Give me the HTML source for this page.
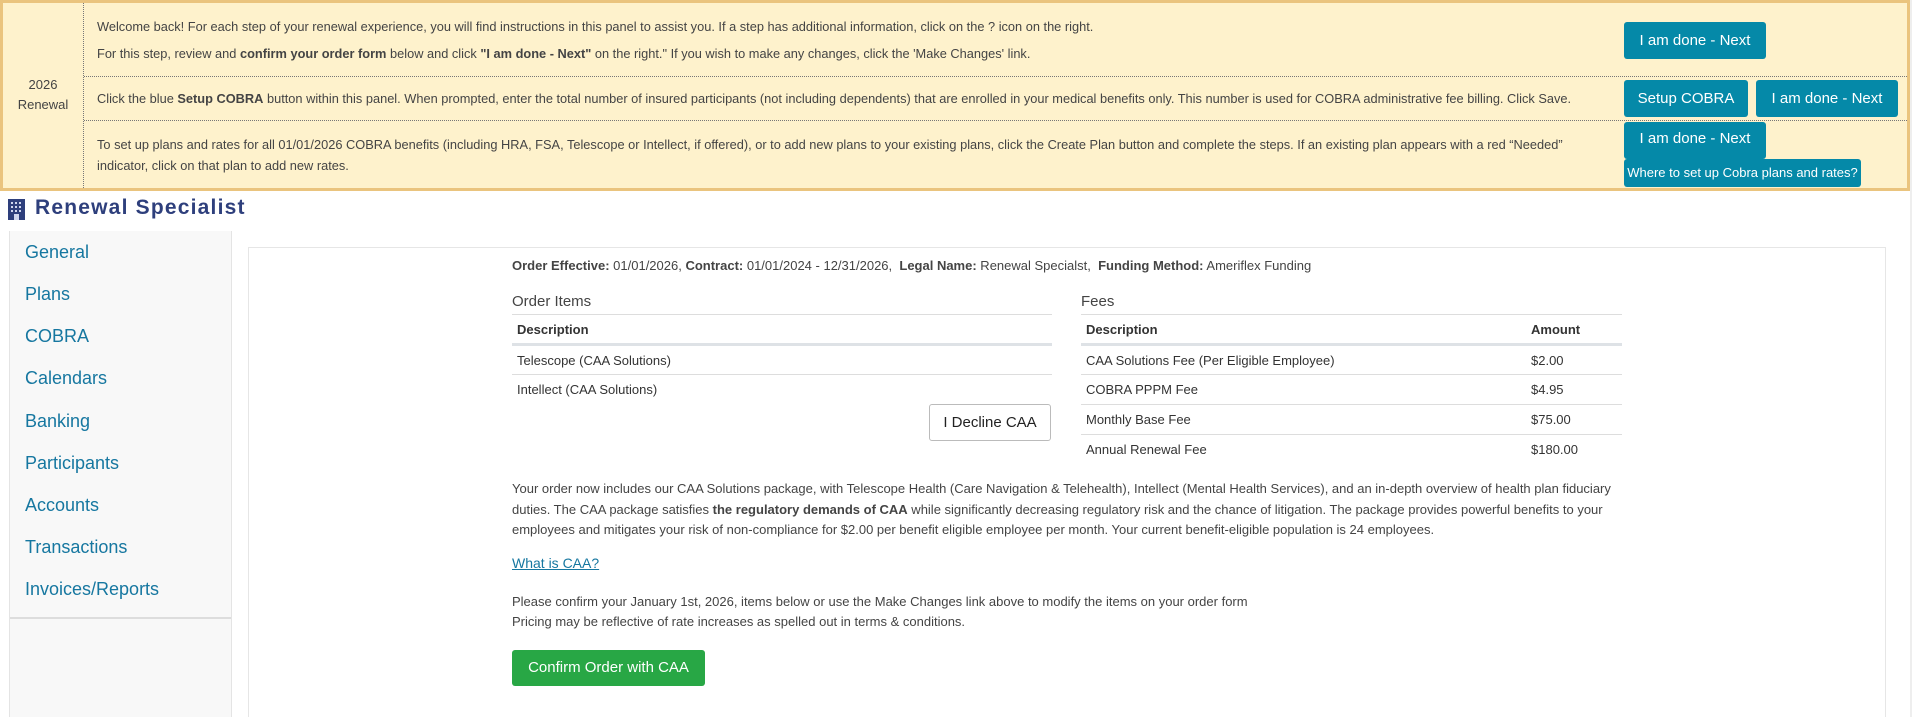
<!DOCTYPE html>
<html><head><meta charset="utf-8"><style>
*{box-sizing:border-box;margin:0;padding:0}
html,body{width:1912px;height:717px;overflow:hidden}
body{background:#fff;font-family:"Liberation Sans",sans-serif;color:#444;position:relative}
.abs{position:absolute}
.banner{left:0;top:0;width:1910px;height:191px;background:#fef2cc;border:3px solid #eac47e}
.col1{left:0;top:0;width:81px;height:185px;border-right:1px dotted #777;font-size:13px;text-align:center;line-height:20px;padding-top:72px;color:#444}
.hl{height:0;border-top:1px dotted #777;left:81px;width:1823px}
.txt{font-size:12.8px;color:#444;left:97px;white-space:nowrap}
.btn{background:#0589a8;color:#fff;border-radius:3px;font-size:15px;text-align:center;font-family:"Liberation Sans",sans-serif}
.side a{position:absolute;left:15px;font-size:18px;color:#1677a0;text-decoration:none}
table{border-collapse:collapse;font-size:13px;color:#333}
td,th{text-align:left;padding:0 5px;height:30px;border-top:1px solid #ddd}
th{font-weight:bold;border-bottom:3px solid #dee2e6;height:30px}
</style></head><body>
<div class="abs banner"></div>
<div class="abs col1" style="left:3px;top:3px">2026<br>Renewal</div>
<div class="abs hl" style="top:76px;left:84px"></div>
<div class="abs hl" style="top:120px;left:84px"></div>
<div class="abs txt" style="top:19px">Welcome back! For each step of your renewal experience, you will find instructions in this panel to assist you. If a step has additional information, click on the ? icon on the right.</div>
<div class="abs txt" style="top:46px">For this step, review and <b>confirm your order form</b> below and click <b>"I am done - Next"</b> on the right." If you wish to make any changes, click the 'Make Changes' link.</div>
<div class="abs txt" style="top:91px">Click the blue <b>Setup COBRA</b> button within this panel. When prompted, enter the total number of insured participants (not including dependents) that are enrolled in your medical benefits only. This number is used for COBRA administrative fee billing. Click Save.</div>
<div class="abs txt" style="top:137px">To set up plans and rates for all 01/01/2026 COBRA benefits (including HRA, FSA, Telescope or Intellect, if offered), or to add new plans to your existing plans, click the Create Plan button and complete the steps. If an existing plan appears with a red “Needed”</div>
<div class="abs txt" style="top:158px">indicator, click on that plan to add new rates.</div>
<div class="abs btn" style="left:1624px;top:22px;width:142px;height:37px;line-height:37px">I am done - Next</div>
<div class="abs btn" style="left:1624px;top:80px;width:124px;height:37px;line-height:37px">Setup COBRA</div>
<div class="abs btn" style="left:1756px;top:80px;width:142px;height:37px;line-height:37px">I am done - Next</div>
<div class="abs btn" style="left:1624px;top:122px;width:142px;height:37px;line-height:34px">I am done - Next</div>
<div class="abs btn" style="left:1624px;top:159px;width:237px;height:28px;line-height:28px;font-size:13px">Where to set up Cobra plans and rates?</div>
<div class="abs" style="left:1910px;top:0;width:2px;height:717px;background:#eee"></div>

<svg class="abs" style="left:8px;top:199px" width="17" height="21" viewBox="0 0 17 21"><rect width="17" height="21" fill="#2e3f7c"/><g fill="#cfd6ee"><rect x="3" y="3" width="2" height="2"/><rect x="7" y="3" width="2" height="2"/><rect x="11" y="3" width="2" height="2"/><rect x="3" y="7" width="2" height="2"/><rect x="7" y="7" width="2" height="2"/><rect x="11" y="7" width="2" height="2"/><rect x="3" y="11" width="2" height="2"/><rect x="7" y="11" width="2" height="2"/><rect x="11" y="11" width="2" height="2"/><rect x="6" y="15" width="5" height="6"/></g></svg>
<div class="abs" style="left:35px;top:196px;font-size:21px;font-weight:bold;color:#2e3f7c;letter-spacing:1.2px">Renewal Specialist</div>

<div class="abs side" style="left:9px;top:231px;width:223px;height:486px;background:#f8f8f8;border-left:1px solid #e4e4e4;border-right:1px solid #e4e4e4">
<div class="abs" style="left:0;top:386px;width:221px;border-top:2px solid #ddd"></div>
<a style="top:11px">General</a><a style="top:53px">Plans</a><a style="top:95px">COBRA</a><a style="top:137px">Calendars</a><a style="top:180px">Banking</a><a style="top:222px">Participants</a><a style="top:264px">Accounts</a><a style="top:306px">Transactions</a><a style="top:348px">Invoices/Reports</a>
</div>

<div class="abs" style="left:248px;top:247px;width:1638px;height:470px;border:1px solid #e6e6e6;border-bottom:none"></div>
<div class="abs" style="left:512px;top:258px;font-size:13px;color:#444;white-space:nowrap"><b>Order Effective:</b> 01/01/2026, <b>Contract:</b> 01/01/2024 - 12/31/2026,&nbsp; <b>Legal Name:</b> Renewal Specialst,&nbsp; <b>Funding Method:</b> Ameriflex Funding</div>
<div class="abs" style="left:512px;top:293px;font-size:15px;color:#444">Order Items</div>
<div class="abs" style="left:1081px;top:293px;font-size:15px;color:#444">Fees</div>
<table class="abs" style="left:512px;top:314px;width:540px">
<tr><th>Description</th></tr><tr><td>Telescope (CAA Solutions)</td></tr><tr><td>Intellect (CAA Solutions)</td></tr></table>
<div class="abs" style="left:929px;top:404px;width:122px;height:37px;border:1px solid #bbb;border-radius:3px;font-size:15px;color:#222;text-align:center;line-height:35px">I Decline CAA</div>
<table class="abs" style="left:1081px;top:314px;width:541px">
<tr><th>Description</th><th style="width:96px">Amount</th></tr>
<tr><td>CAA Solutions Fee (Per Eligible Employee)</td><td>$2.00</td></tr>
<tr><td>COBRA PPPM Fee</td><td>$4.95</td></tr>
<tr><td>Monthly Base Fee</td><td>$75.00</td></tr>
<tr><td>Annual Renewal Fee</td><td>$180.00</td></tr></table>
<div class="abs" style="left:512px;top:479px;width:1120px;font-size:13px;line-height:20.5px;color:#444">Your order now includes our CAA Solutions package, with Telescope Health (Care Navigation &amp; Telehealth), Intellect (Mental Health Services), and an in-depth overview of health plan fiduciary duties. The CAA package satisfies <b>the regulatory demands of CAA</b> while significantly decreasing regulatory risk and the chance of litigation. The package provides powerful benefits to your employees and mitigates your risk of non-compliance for $2.00 per benefit eligible employee per month. Your current benefit-eligible population is 24 employees.</div>
<div class="abs" style="left:512px;top:555px;font-size:14px;color:#1677a0;text-decoration:underline">What is CAA?</div>
<div class="abs" style="left:512px;top:592px;font-size:13px;line-height:20px;color:#444">Please confirm your January 1st, 2026, items below or use the Make Changes link above to modify the items on your order form<br>Pricing may be reflective of rate increases as spelled out in terms &amp; conditions.</div>
<div class="abs" style="left:512px;top:650px;width:193px;height:36px;background:#28a745;border-radius:3px;color:#fff;font-size:15px;text-align:center;line-height:36px">Confirm Order with CAA</div>
</body></html>
